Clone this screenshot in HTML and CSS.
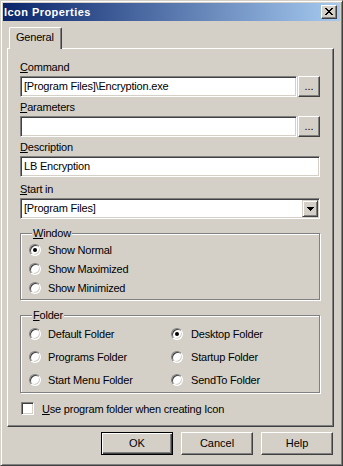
FILE: index.html
```html
<!DOCTYPE html>
<html>
<head>
<meta charset="utf-8">
<link rel="stylesheet" href="styles.css">
</head>
<body>
<div class="window">
  <div class="titlebar">
    <span class="title">Icon Properties</span>
    <span class="close"><svg width="8" height="7" viewBox="0 0 8 7" shape-rendering="crispEdges"><path d="M0 0h2v1h-2z M6 0h2v1h-2z M1 1h2v1h-2z M5 1h2v1h-2z M2 2h4v1h-4z M3 3h2v1h-2z M2 4h4v1h-4z M1 5h2v1h-2z M5 5h2v1h-2z M0 6h2v1h-2z M6 6h2v1h-2z" fill="#000"/></svg></span>
  </div>
  <div class="body">
    <div class="tabs"><div class="tab">General</div></div>
    <div class="panel">
      <div class="field">
        <div class="lbl"><u>C</u>ommand</div>
        <div class="inrow">
          <div class="input grow">[Program Files]\Encryption.exe</div>
          <div class="btn browse">...</div>
        </div>
      </div>
      <div class="field">
        <div class="lbl"><u>P</u>arameters</div>
        <div class="inrow">
          <div class="input grow"></div>
          <div class="btn browse">...</div>
        </div>
      </div>
      <div class="field wide">
        <div class="lbl"><u>D</u>escription</div>
        <div class="input">LB Encryption</div>
      </div>
      <div class="field">
        <div class="lbl"><u>S</u>tart in</div>
        <div class="input select">
          <span class="seltext">[Program Files]</span>
          <span class="arrow"><svg width="7" height="4" viewBox="0 0 7 4" shape-rendering="crispEdges"><path d="M0 0h7v1h-1v1h-1v1h-1v1h-1v-1h-1v-1h-1v-1h-1z" fill="#000"/></svg></span>
        </div>
      </div>
      <div class="group win">
        <div class="legend"><u>W</u>indow</div>
        <div class="opt"><span class="radio on"></span>Show Normal</div>
        <div class="opt"><span class="radio"></span>Show Maximized</div>
        <div class="opt"><span class="radio"></span>Show Minimized</div>
      </div>
      <div class="group folder">
        <div class="legend"><u>F</u>older</div>
        <div class="grid">
          <div class="opt"><span class="radio"></span>Default Folder</div>
          <div class="opt"><span class="radio on"></span>Desktop Folder</div>
          <div class="opt"><span class="radio"></span>Programs Folder</div>
          <div class="opt"><span class="radio"></span>Startup Folder</div>
          <div class="opt"><span class="radio"></span>Start Menu Folder</div>
          <div class="opt"><span class="radio"></span>SendTo Folder</div>
        </div>
      </div>
      <div class="check"><span class="cb"></span><span><u>U</u>se program folder when creating Icon</span></div>
    </div>
    <div class="buttons">
      <div class="btn push default">OK</div>
      <div class="btn push">Cancel</div>
      <div class="btn push">Help</div>
    </div>
  </div>
</div>
</body>
</html>
```

FILE: styles.css
```css
* { box-sizing: border-box; }
html, body { margin: 0; padding: 0; background: #d4d0c8; }
body {
  font-family: "Liberation Sans", Arial, sans-serif;
  font-size: 11px;
  letter-spacing: -0.2px;
  color: #000;
}
.window {
  width: 343px;
  height: 466px;
  background: #d4d0c8;
  border: 1px solid;
  border-color: #d4d0c8 #404040 #404040 #d4d0c8;
  box-shadow: inset 1px 1px #fff, inset -1px -1px #808080;
  padding: 2px;
}
.titlebar {
  height: 18px;
  display: flex;
  align-items: center;
  justify-content: space-between;
  background: linear-gradient(to right, #0a246a, #a6caf0);
  padding-left: 1px;
}
.title {
  color: #fff;
  font-weight: bold;
  letter-spacing: 0.45px;
  line-height: 18px;
}
.close {
  width: 16px;
  height: 14px;
  margin-right: 3px;
  display: flex;
  align-items: center;
  justify-content: center;
  background: #d4d0c8;
  border: 1px solid;
  border-color: #fff #404040 #404040 #fff;
  box-shadow: inset -1px -1px #808080;
  padding-bottom: 1px;
}
.close svg { display: block; }
.body { padding: 0 6px 0 4px; }
.tabs {
  height: 27px;
  display: flex;
  align-items: flex-end;
  padding-left: 2px;
}
.tab {
  position: relative;
  z-index: 1;
  width: 53px;
  height: 22px;
  margin-bottom: -1px;
  background: #d4d0c8;
  border-top: 1px solid #fff;
  border-left: 1px solid #fff;
  border-right: 1px solid #404040;
  border-top-left-radius: 2px;
  border-top-right-radius: 2px;
  box-shadow: inset -1px 0 #808080;
  padding: 3px 0 0 6px;
  line-height: 13px;
}
.panel {
  height: 379px;
  border: 1px solid;
  border-color: #fff #404040 #404040 #fff;
  box-shadow: inset -1px -1px #808080;
  padding: 12px 13px 0 12px;
}
.field { margin-bottom: 4px; }
.field.wide { margin-bottom: 6px; }
.lbl { line-height: 13px; margin-bottom: 2px; }
.inrow { display: flex; gap: 1px; }
.input {
  height: 21px;
  background: #fff;
  border: 1px solid;
  border-color: #808080 #fff #fff #808080;
  box-shadow: inset 1px 1px #404040, inset -1px -1px #d4d0c8;
  padding: 0 2px 0 3px;
  line-height: 19px;
  white-space: nowrap;
  overflow: hidden;
}
.grow { flex: 1; }
.btn {
  background: #d4d0c8;
  border: 1px solid;
  border-color: #fff #404040 #404040 #fff;
  box-shadow: inset -1px -1px #808080;
  text-align: center;
}
.browse {
  width: 22px;
  height: 21px;
  line-height: 18px;
  letter-spacing: 0;
}
.select {
  display: flex;
  align-items: center;
  justify-content: space-between;
  padding-right: 1px;
}
.arrow {
  width: 16px;
  height: 17px;
  display: flex;
  align-items: center;
  justify-content: center;
  background: #d4d0c8;
  border: 1px solid;
  border-color: #d4d0c8 #404040 #404040 #d4d0c8;
  box-shadow: inset 1px 1px #fff, inset -1px -1px #808080;
}
.arrow svg { display: block; }
.group {
  border: 1px solid #808080;
  box-shadow: inset 1px 1px #fff, 1px 1px #fff;
  padding: 0 0 2px 8px;
  margin-top: 14px;
}
.legend {
  width: fit-content;
  margin: -7px 0 0 3px;
  padding: 0 1px;
  background: #d4d0c8;
  line-height: 13px;
  position: relative;
}
.opt {
  height: 19px;
  display: flex;
  align-items: center;
  gap: 7px;
  white-space: nowrap;
}
.folder { margin-top: 15px; padding-bottom: 1px; }
.folder .opt { height: 23px; }
.grid { display: grid; grid-template-columns: 142px auto; }
.folder .grid .opt:nth-child(even) { gap: 8px; }
.radio {
  width: 12px;
  height: 12px;
  flex: none;
  border-radius: 50%;
  background: #fff;
  border: 1px solid;
  border-color: #808080 #fff #fff #808080;
  box-shadow: inset 1px 1px #404040, inset -1px -1px #d4d0c8;
  display: flex;
  align-items: center;
  justify-content: center;
}
.radio.on::after {
  content: "";
  width: 4px;
  height: 4px;
  border-radius: 50%;
  background: #000;
}
.check {
  margin-top: 9px;
  height: 13px;
  display: flex;
  align-items: center;
  gap: 8px;
  padding-left: 1px;
  white-space: nowrap;
}
.cb {
  width: 13px;
  height: 13px;
  flex: none;
  background: #fff;
  border: 1px solid;
  border-color: #808080 #fff #fff #808080;
  box-shadow: inset 1px 1px #404040, inset -1px -1px #d4d0c8;
}
.buttons {
  display: flex;
  justify-content: flex-end;
  gap: 8px;
  margin-top: 5px;
  padding-right: 1px;
}
.push {
  width: 72px;
  height: 23px;
  line-height: 21px;
  letter-spacing: 0;
}
.push.default {
  border: 1px solid #000;
  box-shadow: inset 1px 1px #fff, inset -1px -1px #404040, inset -2px -2px #808080;
}
```
